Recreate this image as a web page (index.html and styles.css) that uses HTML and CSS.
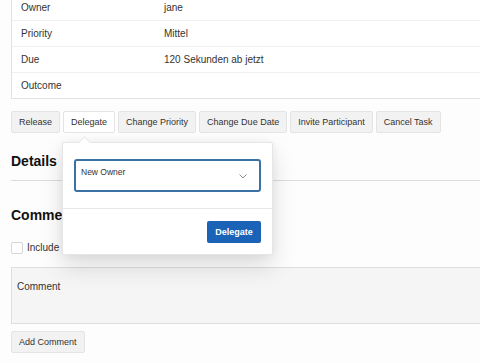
FILE: index.html
```html
<!DOCTYPE html>
<html lang="en">
<head>
  <meta charset="UTF-8">
  <meta name="viewport" content="width=device-width, initial-scale=1.0">
  <title>Task</title>
  <link rel="stylesheet" href="styles.css">
</head>
<body>
  <div class="page">
    <div class="taskInfo">
      <div class="infoRow"><span class="infoKey">Owner</span><span>jane</span></div>
      <div class="infoRow"><span class="infoKey">Priority</span><span>Mittel</span></div>
      <div class="infoRow"><span class="infoKey">Due</span><span>120 Sekunden ab jetzt</span></div>
      <div class="infoRow"><span class="infoKey">Outcome</span><span></span></div>
    </div>

    <div class="actions">
      <button class="btn">Release</button>
      <button class="btn active">Delegate</button>
      <button class="btn">Change Priority</button>
      <button class="btn">Change Due Date</button>
      <button class="btn">Invite Participant</button>
      <button class="btn">Cancel Task</button>
    </div>

    <div class="section">
      <h2 class="sectionTitle">Details</h2>
    </div>

    <h2 class="sectionTitle comments">Comments</h2>
    <label class="check"><span class="checkBox"></span>Include comments in event stream</label>
    <div class="commentBox">Comment</div>
    <button class="btn addComment">Add Comment</button>

    <!-- popover opened by the Delegate button -->
    <div class="popover">
      <div class="popoverBody">
        <div class="selectBox">
          <span class="selectLabel">New Owner</span>
          <svg class="chevron" width="8" height="5" viewBox="0 0 8 5"><path d="M0.5 0.5 L4 4 L7.5 0.5" fill="none" stroke="#8a8a8a" stroke-width="1"/></svg>
        </div>
      </div>
      <div class="popoverFooter">
        <button class="primary">Delegate</button>
      </div>
    </div>
  </div>
</body>
</html>
```

FILE: styles.css
```css
body {
  margin: 0;
  overflow: hidden;
  background-color: #fdfdfd;
  font-family: "Liberation Sans", Arial, sans-serif;
  color: #333;
}
.page {
  display: flow-root;
  position: relative;
  width: 520px;
  padding: 0 0 0 11px;
}
.taskInfo {
  margin-top: -6px;
  border: 1px solid #e2e2e2;
  background-color: #fff;
}
.infoRow {
  display: flex;
  align-items: center;
  height: 25px;
  padding-left: 9px;
  font-size: 10px;
  border-top: 1px solid #f0f0f0;
}
.infoRow:first-child {
  border-top: none;
}
.infoKey {
  width: 143px;
}
.actions {
  display: flex;
  gap: 3px;
  margin-top: 12px;
}
.btn {
  height: 22px;
  padding: 0 7px;
  border: 1px solid #e4e4e4;
  border-radius: 2px;
  background-color: #f2f2f2;
  font-family: inherit;
  font-size: 9px;
  color: #333;
}
.btn.active {
  background-color: #fff;
}
.section {
  padding-bottom: 10px;
  border-bottom: 1px solid #dcdcdc;
  margin-top: 19px;
}
.sectionTitle {
  margin: 0;
  font-size: 14px;
  line-height: 18px;
  font-weight: bold;
  color: #111;
}
.comments {
  margin-top: 25px;
}
.check {
  display: flex;
  align-items: center;
  gap: 4px;
  margin-top: 18px;
  height: 11px;
  font-size: 10px;
}
.checkBox {
  width: 10px;
  height: 10px;
  border: 1px solid #d6d6d6;
  border-radius: 2px;
  background-color: #fff;
}
.commentBox {
  height: 57px;
  margin-top: 14px;
  padding: 13px 5px 0;
  box-sizing: border-box;
  border: 1px solid #dedede;
  background-color: #f5f5f5;
  font-size: 10px;
}
.addComment {
  margin-top: 7px;
}
.popover {
  position: absolute;
  left: 62px;
  top: 142px;
  width: 211px;
  box-sizing: border-box;
  border: 1px solid #e6e6e6;
  border-radius: 2px;
  background-color: #fff;
  box-shadow: 0 12px 24px rgba(0, 0, 0, 0.13), 0 0 8px rgba(0, 0, 0, 0.06);
}
.popover::before {
  content: "";
  position: absolute;
  top: -5px;
  left: 17px;
  width: 8px;
  height: 8px;
  background-color: #fff;
  border-top: 1px solid #e6e6e6;
  border-left: 1px solid #e6e6e6;
  transform: rotate(45deg);
}
.popoverBody {
  padding: 16px 11px 16px;
  border-bottom: 1px solid #e8e8e8;
}
.selectBox {
  position: relative;
  height: 33px;
  box-sizing: border-box;
  padding: 6px 0 0 5px;
  border: 2px solid #3a72a3;
  border-radius: 3px;
  font-size: 8.5px;
}
.chevron {
  position: absolute;
  right: 12px;
  top: 13px;
}
.popoverFooter {
  display: flex;
  justify-content: flex-end;
  padding: 12px 11px 11px;
}
.primary {
  height: 22px;
  width: 54px;
  border: none;
  border-radius: 2px;
  background-color: #1b63b7;
  color: #fff;
  font-family: inherit;
  font-size: 9px;
  font-weight: bold;
}
```
